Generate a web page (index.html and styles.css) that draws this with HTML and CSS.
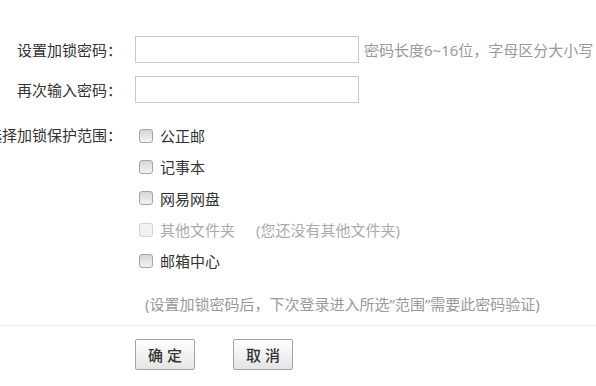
FILE: index.html
```html
<!DOCTYPE html>
<html lang="zh-CN">
<head>
    <title>邮箱加锁</title>
    <meta charset="UTF-8">
    <meta name="viewport" content="width=device-width, initial-scale=1.0">
    <link rel="stylesheet" href="styles.css">
</head>
<body>
    <div class="formulario">
        <div class="fila">
            <label class="etiqueta">设置加锁密码：</label>
            <input class="campo" type="password">
            <span class="pista">密码长度6~16位，字母区分大小写</span>
        </div>
        <div class="fila">
            <label class="etiqueta">再次输入密码：</label>
            <input class="campo" type="password">
        </div>
        <div class="fila fila-rango">
            <label class="etiqueta">选择加锁保护范围：</label>
            <div class="opciones">
                <label class="opcion"><input class="casilla" type="checkbox">公正邮</label>
                <label class="opcion"><input class="casilla" type="checkbox">记事本</label>
                <label class="opcion"><input class="casilla" type="checkbox">网易网盘</label>
                <label class="opcion opcion-off"><input class="casilla" type="checkbox" disabled>其他文件夹<span class="nota-off">(您还没有其他文件夹)</span></label>
                <label class="opcion"><input class="casilla" type="checkbox">邮箱中心</label>
            </div>
        </div>
        <div class="nota">(设置加锁密码后，下次登录进入所选”范围”需要此密码验证)</div>
    </div>
    <div class="pie">
        <button class="boton">确 定</button>
        <button class="boton">取 消</button>
    </div>
</body>
</html>
```

FILE: styles.css
```css
body {
    margin: 0;
    font-family: "Noto Sans", "Noto Sans CJK SC", sans-serif;
    font-size: 15px;
    color: #333;
    background: #fff;
    overflow: hidden;
}

.formulario {
    padding-top: 36px;
}

.fila {
    display: flex;
    align-items: center;
    height: 27px;
    margin-bottom: 13px;
}

.etiqueta {
    flex-shrink: 0;
    display: flex;
    justify-content: flex-end;
    width: 122px;
    margin-right: 13px;
    white-space: nowrap;
}

.campo {
    box-sizing: border-box;
    width: 224px;
    height: 27px;
    margin: 0;
    border: 1px solid #c3cad2;
    outline: none;
    background: #fff;
}

.pista {
    margin-left: 5px;
    color: #999;
    white-space: nowrap;
}

.fila-rango {
    height: auto;
    align-items: flex-start;
    margin-top: 17px;
    margin-bottom: 0;
}

.fila-rango .etiqueta {
    line-height: 31px;
}

.opciones {
    display: flex;
    flex-direction: column;
}

.opcion {
    display: flex;
    align-items: center;
    height: 31.3px;
    white-space: nowrap;
}

.casilla {
    appearance: none;
    -webkit-appearance: none;
    box-sizing: border-box;
    width: 14px;
    height: 14px;
    margin: 0 7px 0 4px;
    border: 1px solid #a4a4a4;
    border-radius: 3px;
    background: linear-gradient(#d6d6d6, #f3f3f3);
}

.opcion-off {
    color: #aaa;
}

.opcion-off .casilla {
    border-color: #d2d2d2;
    background: #f2f2f2;
}

.nota-off {
    margin-left: 21px;
}

.nota {
    margin: 17px 0 0 145px;
    color: #999;
    white-space: nowrap;
}

.pie {
    display: flex;
    gap: 38px;
    margin-top: 11px;
    padding: 13px 0 0 135px;
    border-top: 1px solid #ececec;
}

.boton {
    width: 60px;
    height: 31px;
    padding: 0;
    font-family: inherit;
    font-size: 15px;
    font-weight: 500;
    color: #333;
    border: 1px solid #a3a3a3;
    border-radius: 2px;
    background: linear-gradient(#ffffff, #e4e4e4);
    cursor: pointer;
}
```
